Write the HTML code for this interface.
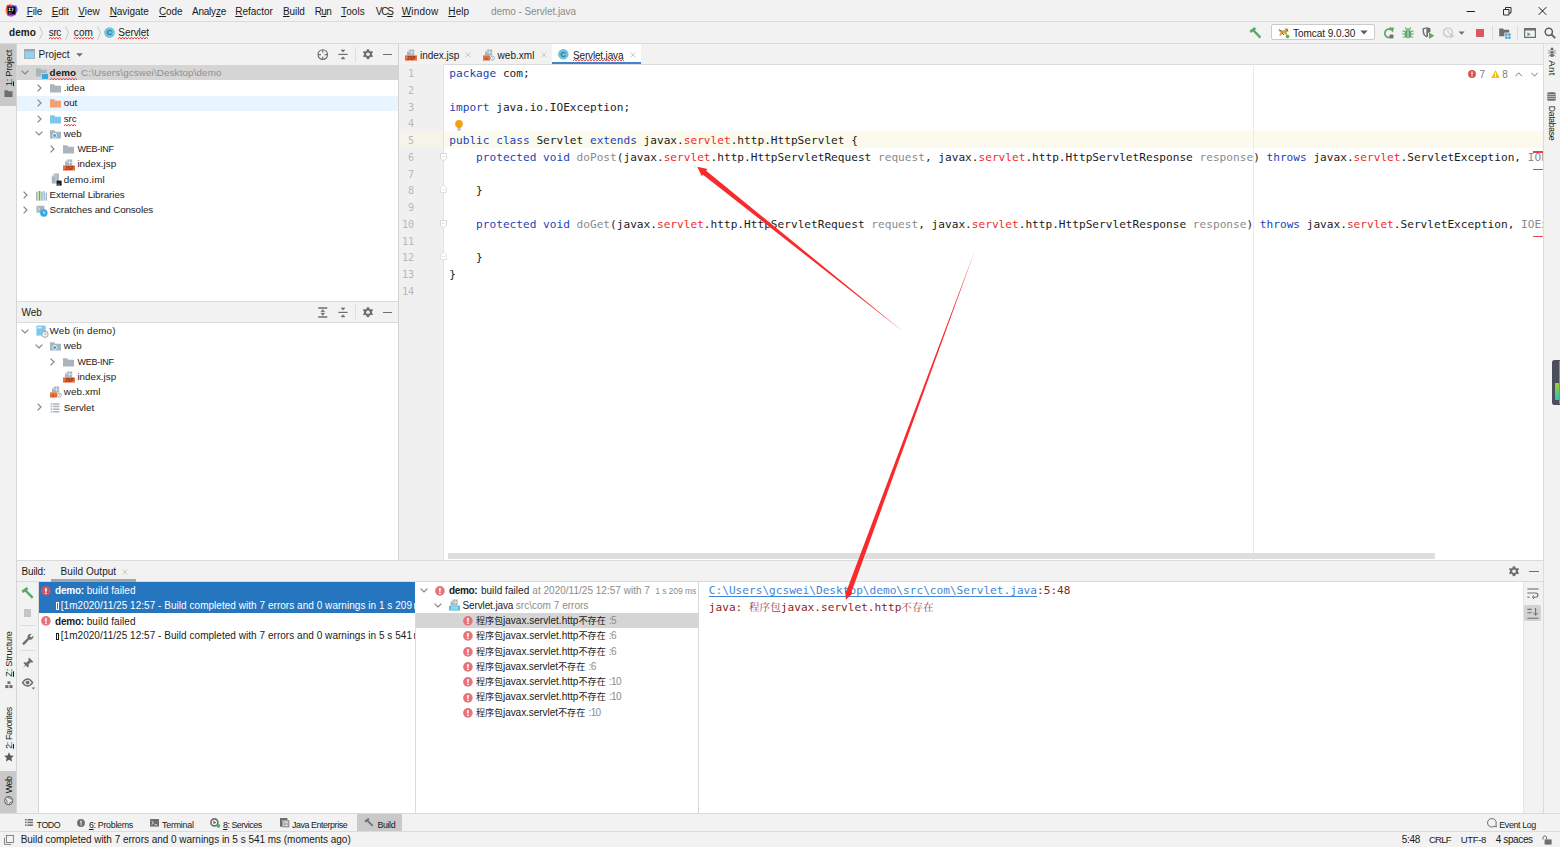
<!DOCTYPE html>
<html lang="en">
<head>
<meta charset="utf-8">
<title>demo - Servlet.java</title>
<style>
html,body{margin:0;padding:0;}
body{width:1560px;height:847px;overflow:hidden;background:#f2f2f2;position:relative;
  font-family:"Liberation Sans","Noto Sans CJK SC",sans-serif;font-size:10px;color:#1a1a1a;}
.abs{position:absolute;}
.t{position:absolute;white-space:pre;line-height:14px;height:14px;}
.hl{position:absolute;height:1px;background:#dadada;}
.vl{position:absolute;width:1px;background:#d6d6d6;}
.gray{color:#8c8c8c;}
.wavy{text-decoration:underline wavy #e0403a;text-decoration-thickness:0.7px;text-underline-offset:1.5px;}
u{text-decoration:underline;text-underline-offset:1px;}
svg{position:absolute;overflow:visible;}
.vt{font-size:9.6px;}
.vt span{position:absolute;left:50%;top:50%;transform:translate(-50%,-50%) rotate(-90deg);white-space:pre;line-height:14px;}
.vr span{transform:translate(-50%,-50%) rotate(90deg);}
/* code */
.code{position:absolute;white-space:pre;font-family:"DejaVu Sans Mono","Liberation Mono",monospace;font-size:11.13px;line-height:16.77px;color:#1a1a1a;}
.kw{color:#1c3fb5;}
.er{color:#ee2b2b;}
.un{color:#8a8a8a;}
.ln{position:absolute;font-family:"DejaVu Sans Mono","Liberation Mono",monospace;font-size:10.2px;line-height:16.77px;color:#b8b8b8;white-space:pre;}
.row{position:absolute;left:0;right:0;height:15.3px;}
</style>
</head>
<body>

<!-- ============ MENU BAR ============ -->
<div class="abs" id="menubar" style="left:0;top:0;width:1560px;height:21px;background:#f2f2f2;"></div>
<!-- IntelliJ logo -->
<svg style="left:5px;top:4px;" width="13" height="13" viewBox="0 0 13 13">
  <defs>
    <linearGradient id="lg1" x1="0" y1="1" x2="1" y2="0"><stop offset="0" stop-color="#fc801d"/><stop offset="0.45" stop-color="#fe2857"/><stop offset="1" stop-color="#fe2857"/></linearGradient>
    <linearGradient id="lg2" x1="0" y1="0" x2="1" y2="1"><stop offset="0" stop-color="#087cfa"/><stop offset="1" stop-color="#b345f1"/></linearGradient>
  </defs>
  <path d="M0.3 6.5 L2 1 L6.5 0.3 L5 7 Z" fill="url(#lg1)"/>
  <path d="M6.5 0.8 L11.5 1.8 L12.8 6 L10 11.8 L6 9 Z" fill="url(#lg2)"/>
  <path d="M1.5 8 L6 5 L10.5 10.5 L7 12.7 L2.5 12 Z" fill="#b345f1"/>
  <path d="M0.3 6.5 L3 5 L3.5 10 L1.8 10.5 Z" fill="#fc801d"/>
  <rect x="2.6" y="2.6" width="7.8" height="7.8" fill="#000"/>
  <rect x="3.6" y="8.7" width="3" height="0.6" fill="#fff"/>
  <path d="M3.6 3.7h2.2v0.7h-0.7v1.9h0.7v0.7h-2.2v-0.7h0.7v-1.9h-0.7z M6.6 3.7h1.7v2.6q0 1-1.1 1h-0.7v-0.7h0.5q0.5 0 0.5-0.5v-1.7h-0.9z" fill="#fff"/>
</svg>
<div class="t" style="left:26.7px;top:5px;"><span style="letter-spacing:-0.131px;"><u>F</u>ile</span></div>
<div class="t" style="left:51.7px;top:5px;"><span style="letter-spacing:-0.059px;"><u>E</u>dit</span></div>
<div class="t" style="left:78.3px;top:5px;"><span style="letter-spacing:-0.029px;"><u>V</u>iew</span></div>
<div class="t" style="left:109.7px;top:5px;"><span style="letter-spacing:-0.061px;"><u>N</u>avigate</span></div>
<div class="t" style="left:159px;top:5px;"><span style="letter-spacing:-0.155px;"><u>C</u>ode</span></div>
<div class="t" style="left:192px;top:5px;"><span style="letter-spacing:-0.225px;">Analy<u>z</u>e</span></div>
<div class="t" style="left:235.3px;top:5px;"><span style="letter-spacing:-0.052px;"><u>R</u>efactor</span></div>
<div class="t" style="left:283px;top:5px;"><span style="letter-spacing:-0.110px;"><u>B</u>uild</span></div>
<div class="t" style="left:314.7px;top:5px;"><span style="letter-spacing:-0.686px;">R<u>u</u>n</span></div>
<div class="t" style="left:341px;top:5px;"><span style="letter-spacing:0.128px;"><u>T</u>ools</span></div>
<div class="t" style="left:375.7px;top:5px;"><span style="letter-spacing:-1.193px;">VC<u>S</u></span></div>
<div class="t" style="left:401.7px;top:5px;"><span style="letter-spacing:0.168px;"><u>W</u>indow</span></div>
<div class="t" style="left:448.3px;top:5px;"><span style="letter-spacing:0.102px;"><u>H</u>elp</span></div>
<div class="t gray" style="left:491px;top:5px;color:#8a8a8a;"><span style="letter-spacing:-0.061px;">demo - Servlet.java</span></div>
<!-- window controls -->
<svg style="left:1466px;top:6px;" width="90" height="10" viewBox="0 0 90 10" fill="none" stroke="#1a1a1a" stroke-width="1">
  <path d="M0.7 5.5h8.2"/>
  <path d="M37.5 3.5h5.5v5.5h-5.5z M39.5 3.5v-2h5.5v5.5h-2" stroke-width="0.9"/>
  <path d="M72.7 1.2l7.6 7.6M80.3 1.2l-7.6 7.6" stroke-width="1"/>
</svg>
<div class="hl" style="left:0;top:21px;width:1560px;background:#dcdcdc;"></div>

<!-- ============ NAV BAR ============ -->
<div class="abs" id="navbar" style="left:0;top:22px;width:1560px;height:21px;background:#f2f2f2;"></div>
<div class="t" style="left:9px;top:26px;font-weight:bold;"><span style="letter-spacing:0.082px;">demo</span></div>
<div class="t" style="left:48.8px;top:26px;"><span style="letter-spacing:-0.381px;">src</span></div><svg style="left:48.8px;top:37.3px;" width="12" height="2.4" viewBox="0 0 12 2.4" fill="none" stroke="#f04a4a" stroke-width="1.0"><path d="M0 2.1l1.5 -1.9l1.5 1.9l1.5 -1.9l1.5 1.9l1.5 -1.9l1.5 1.9l1.5 -1.9l1.5 1.9"/></svg>
<div class="t" style="left:73.8px;top:26px;"><span style="letter-spacing:0.098px;">com</span></div><svg style="left:73.8px;top:37.3px;" width="19" height="2.4" viewBox="0 0 19 2.4" fill="none" stroke="#f04a4a" stroke-width="1.0"><path d="M0 2.1l1.5 -1.9l1.5 1.9l1.5 -1.9l1.5 1.9l1.5 -1.9l1.5 1.9l1.5 -1.9l1.5 1.9l1.5 -1.9l1.5 1.9l1.5 -1.9l1.5 1.9l1.5 -1.9"/></svg>
<div class="t" style="left:118.3px;top:26px;"><span style="letter-spacing:-0.061px;">Servlet</span></div><svg style="left:118.3px;top:37.3px;" width="31" height="2.4" viewBox="0 0 31 2.4" fill="none" stroke="#f04a4a" stroke-width="1.0"><path d="M0 2.1l1.5 -1.9l1.5 1.9l1.5 -1.9l1.5 1.9l1.5 -1.9l1.5 1.9l1.5 -1.9l1.5 1.9l1.5 -1.9l1.5 1.9l1.5 -1.9l1.5 1.9l1.5 -1.9l1.5 1.9l1.5 -1.9l1.5 1.9l1.5 -1.9l1.5 1.9l1.5 -1.9l1.5 1.9"/></svg>
<svg style="left:38px;top:26px;" width="70" height="14" viewBox="0 0 70 14" fill="none" stroke="#c9c9c9" stroke-width="1">
  <path d="M1.5 0.5l3 6.5l-3 6.5"/><path d="M27.5 0.5l3 6.5l-3 6.5"/><path d="M59.5 0.5l3 6.5l-3 6.5"/>
</svg>
<!-- class icon -->
<svg style="left:104px;top:26.8px;" width="11" height="11" viewBox="0 0 11 11">
  <circle cx="5.5" cy="5.5" r="5.3" fill="#6cc3dc"/>
  <text x="5.5" y="8.2" font-family="Liberation Sans, sans-serif" font-size="7.5" font-weight="bold" fill="#3e6f8e" text-anchor="middle">C</text>
</svg>
<!-- toolbar right -->
<svg style="left:1249px;top:27px;" width="13" height="12" viewBox="0 0 13 12">
  <path d="M1.2 4.8L6.4 1" stroke="#59a869" stroke-width="2.7" fill="none"/><path d="M4.4 3.4L11.4 10.6" stroke="#59a869" stroke-width="2.3" fill="none"/>
</svg>
<div class="abs" style="left:1271px;top:24.4px;width:103.6px;height:16px;background:#fff;border:1px solid #cbcbcb;border-radius:2px;box-sizing:border-box;"></div>
<!-- tomcat icon -->
<svg style="left:1277px;top:26px;" width="14" height="13" viewBox="0 0 14 13">
  <path d="M1 4 L4 5 L7.6 4 L10.6 2 L11.4 4.4 L9.6 6.4 L10.4 9 L9 9.4 L7.6 7.4 L5 8 L3.4 10 L2.2 9.2 L3.6 6.8 Z" fill="#d9a343"/>
  <path d="M2 3.4 L5 5.4 M8.6 2.6 L10.8 5.4 M5 7 L7 9" stroke="#4d4d4d" stroke-width="0.9" fill="none"/>
  <circle cx="10.6" cy="10.6" r="1.8" fill="#2bc840"/>
</svg>
<div class="t" style="left:1293px;top:26.7px;"><span style="letter-spacing:-0.032px;">Tomcat 9.0.30</span></div>
<svg style="left:1360px;top:30px;" width="8" height="5" viewBox="0 0 8 5"><path d="M0.3 0.5h7.4l-3.7 4z" fill="#5c5c5c"/></svg>
<!-- rerun -->
<svg style="left:1383px;top:27px;" width="12" height="12" viewBox="0 0 12 12" fill="none">
  <path d="M8.8 3.2 A4.2 4.2 0 1 0 9.6 8.4" stroke="#59a869" stroke-width="1.7"/>
  <path d="M6.2 0.2 L11 0.8 L9.8 5.4 Z" fill="#59a869"/>
  <rect x="6.6" y="7.6" width="3.8" height="3.8" fill="#6e6e6e"/>
</svg>
<!-- debug -->
<svg style="left:1402px;top:27px;" width="12" height="12" viewBox="0 0 12 12">
  <ellipse cx="6" cy="7" rx="3.4" ry="4.2" fill="#59a869"/>
  <path d="M3.6 2.6 A2.6 2.2 0 0 1 8.4 2.6 Z" fill="#59a869"/>
  <path d="M0.5 4.2h2.6 M8.9 4.2h2.6 M0.3 7h2.4 M9.3 7h2.4 M0.8 10h2.4 M8.8 10h2.4 M3 0.6l1.2 1.4 M9 0.6l-1.2 1.4" stroke="#59a869" stroke-width="1.1" fill="none"/>
  <path d="M6 4v6.6" stroke="#f2f2f2" stroke-width="0.8"/>
</svg>
<!-- coverage -->
<svg style="left:1422px;top:27px;" width="13" height="12" viewBox="0 0 13 12">
  <path d="M0.6 1.2 L5 0.2 L8.4 1.2 V5 L6 6 V9.6 L4.6 10.6 Q0.6 8.4 0.6 4.6 Z" fill="#6e6e6e"/>
  <path d="M4.4 1.6 V9 Q2 7.2 2 4.4 V2.2 Z" fill="#f2f2f2"/>
  <path d="M7 5.6 L12.4 8.8 L7 12 Z" fill="#59a869"/>
</svg>
<!-- profiler disabled -->
<svg style="left:1443px;top:27px;" width="22" height="12" viewBox="0 0 22 12">
  <circle cx="5" cy="5.4" r="4.4" fill="none" stroke="#c4c4c4" stroke-width="1.2"/>
  <path d="M5 2.6v3l1.8 1.2" stroke="#c4c4c4" stroke-width="1" fill="none"/>
  <path d="M6.6 5.6 L12 8.8 L6.6 12 Z" fill="#c9c9c9" stroke="#f2f2f2" stroke-width="0.6"/>
  <path d="M15.6 4.4h6l-3 3.4z" fill="#6e6e6e"/>
</svg>
<!-- stop -->
<div class="abs" style="left:1476px;top:29.3px;width:7.6px;height:7.6px;background:#db5860;"></div>
<div class="vl" style="left:1492px;top:26px;height:14px;background:#dcdcdc;"></div>
<!-- project structure -->
<svg style="left:1499px;top:27px;" width="12" height="12" viewBox="0 0 12 12">
  <path d="M0.2 1.4h3.6l1.2 1.4h5.2v6.4h-10z" fill="#6e6e6e"/>
  <rect x="5.4" y="5.6" width="6.4" height="6.4" fill="#f2f2f2"/>
  <rect x="6.2" y="6.4" width="2.3" height="2.3" fill="#389fd6"/><rect x="9.3" y="6.4" width="2.3" height="2.3" fill="#389fd6"/>
  <rect x="6.2" y="9.5" width="2.3" height="2.3" fill="#389fd6"/><rect x="9.3" y="9.5" width="2.3" height="2.3" fill="#389fd6"/>
</svg>
<div class="vl" style="left:1517px;top:26px;height:14px;background:#dcdcdc;"></div>
<!-- run anything -->
<svg style="left:1524px;top:28px;" width="12" height="10" viewBox="0 0 12 10">
  <path d="M0.6 0.6h10.8v8.8h-10.8z" fill="none" stroke="#6e6e6e" stroke-width="1.2"/>
  <path d="M0.6 0.6h10.8v2h-10.8z" fill="#6e6e6e"/>
  <path d="M3.4 4.2l3.4 2l-3.4 2z" fill="#59a869"/>
</svg>
<!-- search -->
<svg style="left:1544px;top:27px;" width="12" height="12" viewBox="0 0 12 12" fill="none" stroke="#5e5e5e">
  <circle cx="4.8" cy="4.8" r="3.6" stroke-width="1.5"/><path d="M7.4 7.4l3.8 3.8" stroke-width="1.8"/>
</svg>
<div class="hl" style="left:0;top:43px;width:1560px;"></div>

<!-- ============ LEFT STRIP ============ -->
<div class="abs" id="leftstrip" style="left:0;top:44px;width:16px;height:769px;background:#f2f2f2;"></div>
<div class="vl" style="left:16px;top:44px;height:769px;"></div>

<!-- ============ PROJECT PANEL ============ -->
<div class="abs" id="projhead" style="left:17px;top:44px;width:381px;height:21px;background:#f2f2f2;"></div>
<div class="hl" style="left:17px;top:65px;width:381px;"></div>
<div class="abs" id="projtree" style="left:17px;top:65px;width:381px;height:236px;background:#fff;"></div>

<!-- ============ WEB PANEL ============ -->
<div class="hl" style="left:17px;top:301px;width:381px;"></div>
<div class="abs" id="webhead" style="left:17px;top:302px;width:381px;height:20px;background:#f2f2f2;"></div>
<div class="hl" style="left:17px;top:322px;width:381px;"></div>
<div class="abs" id="webtree" style="left:17px;top:323px;width:381px;height:237px;background:#fff;"></div>
<div class="vl" style="left:397.6px;top:44px;height:516px;width:1.5px;background:#d3d3d3;"></div>

<!-- ============ EDITOR ============ -->
<div class="abs" id="tabs" style="left:399px;top:44px;width:1145px;height:20px;background:#f2f2f2;"></div>
<div class="hl" style="left:399px;top:64px;width:1145px;"></div>
<div class="abs" id="editor" style="left:399px;top:65px;width:1145px;height:495px;background:#fff;overflow:hidden;"></div>

<!-- ============ RIGHT STRIP ============ -->
<div class="vl" style="left:1543px;top:44px;height:769px;"></div>
<div class="abs" id="rightstrip" style="left:1544px;top:44px;width:16px;height:769px;background:#f2f2f2;"></div>

<!-- ============ BUILD PANEL ============ -->
<div class="hl" style="left:17px;top:560px;width:1526px;"></div>
<div class="abs" id="buildhead" style="left:17px;top:561px;width:1526px;height:20px;background:#f2f2f2;"></div>
<div class="hl" style="left:17px;top:581px;width:1526px;"></div>
<div class="abs" id="build" style="left:17px;top:582px;width:1526px;height:231px;background:#fff;overflow:hidden;"></div>

<!-- ============ BOTTOM TOOL BAR ============ -->
<div class="hl" style="left:0;top:813.4px;width:1560px;"></div>
<div class="abs" id="bottombar" style="left:0;top:814.2px;width:1560px;height:17.4px;background:#f2f2f2;"></div>
<div class="hl" style="left:0;top:831.4px;width:1560px;background:#dcdcdc;"></div>

<!-- ============ STATUS BAR ============ -->
<div class="abs" id="status" style="left:0;top:832.4px;width:1560px;height:15px;background:#f2f2f2;"></div>

<!-- left strip content -->
<div class="abs" style="left:0;top:43.6px;width:16px;height:62.8px;background:#c9c9c9;"></div>
<div class="abs" style="left:0;top:770.6px;width:16px;height:42.6px;background:#c9c9c9;"></div>
<div class="t vt" style="left:2.2px;top:49.7px;width:14px;height:36.3px;"><span style="letter-spacing:-0.253px;font-size:9.2px;"><u>1</u>: Project</span></div>
<svg style="left:4.4px;top:90.4px;" width="9" height="7.2" viewBox="0 0 9 8"><path d="M0 0.2h3.4l1 1.2h4.6v6.4h-9z" fill="#6e6e6e"/></svg>
<div class="t vt" style="left:2.2px;top:631.5px;width:14px;height:45.5px;"><span style="letter-spacing:-0.210px;font-size:9.2px;"><u>Z</u>: Structure</span></div>
<svg style="left:4.6px;top:680.6px;" width="8" height="7.4" viewBox="0 0 9 9" fill="#6e6e6e"><rect x="2.6" y="0.4" width="3.6" height="3.2"/><rect x="0" y="5" width="3.8" height="3.6"/><rect x="5" y="5" width="3.8" height="3.6"/></svg>
<div class="t vt" style="left:2.2px;top:707px;width:14px;height:41.3px;"><span style="letter-spacing:-0.390px;font-size:8.8px;"><u>2</u>: Favorites</span></div>
<svg style="left:4px;top:752px;" width="10" height="10" viewBox="0 0 10 10"><path d="M5 0.2l1.5 3.2l3.4 0.4l-2.5 2.3l0.7 3.5l-3.1-1.8l-3.1 1.8l0.7-3.5l-2.5-2.3l3.4-0.4z" fill="#5a5a5a"/></svg>
<div class="t vt" style="left:2.2px;top:776.3px;width:14px;height:16.7px;"><span style="letter-spacing:-0.548px;font-size:9px;">Web</span></div>
<svg style="left:4px;top:796px;" width="9.4" height="9.4" viewBox="0 0 10 10"><circle cx="5" cy="5" r="4.3" fill="#e4e4e4" stroke="#6e6e6e" stroke-width="1.2"/><path d="M2 3.4q2 2 1.2 4.6M4 1q1.6 2.4 4.6 2.2M5.4 9q0.2-2.6 3.4-3" stroke="#6e6e6e" stroke-width="1" fill="none"/></svg>

<!-- project header content -->
<svg style="left:24px;top:49px;" width="11" height="10" viewBox="0 0 11 10"><rect x="0.4" y="0.4" width="10.2" height="9" fill="#93d2ee" stroke="#9aa7b0" stroke-width="0.8"/><rect x="0" y="0" width="11" height="2.4" fill="#9aa7b0"/></svg>
<div class="t" style="left:38.5px;top:47.8px;font-size:10px;"><span style="letter-spacing:-0.018px;">Project</span></div>
<svg style="left:76px;top:52.5px;" width="7" height="4" viewBox="0 0 7 4"><path d="M0.2 0.2h6.6l-3.3 3.6z" fill="#6e6e6e"/></svg>
<svg style="left:317px;top:48.5px;" width="12" height="12" viewBox="0 0 12 12" fill="none" stroke="#6e6e6e" stroke-width="1.1"><circle cx="5.8" cy="5.6" r="4.8"/><path d="M5.8 0.8v3M5.8 7.4v3M1 5.6h3M7.6 5.6h3"/></svg>
<svg style="left:338.2px;top:48.6px;" width="10" height="11" viewBox="0 0 10 11" fill="#6e6e6e" stroke="#6e6e6e" stroke-width="1.2"><path d="M0.4 5.4h9.2"/><path d="M3 0.9h4l-2 2.2zM3 9.9h4l-2-2.2z" stroke-width="0.5"/></svg>
<div class="vl" style="left:355px;top:46.6px;height:15px;background:#dedede;"></div>
<svg style="left:363px;top:49px;" width="10" height="11" viewBox="0 0 10 11"><path d="M5 0.2l1.2 0.2l0.4 1.5l1.2 0.7l1.4-0.5l0.8 1.2l-1 1.2v1.4l1 1.2l-0.8 1.2l-1.4-0.5l-1.2 0.7l-0.4 1.5l-1.2 0.2l-1.2-0.2l-0.4-1.5l-1.2-0.7l-1.4 0.5l-0.8-1.2l1-1.2v-1.4l-1-1.2l0.8-1.2l1.4 0.5l1.2-0.7l0.4-1.5z" fill="#6e6e6e"/><circle cx="5" cy="5.3" r="1.8" fill="#f2f2f2"/></svg>
<div class="abs" style="left:383px;top:53.6px;width:9px;height:1.2px;background:#6e6e6e;"></div>

<!-- project tree -->
<div class="abs" style="left:17px;top:65.4px;width:381px;height:14.8px;background:#d5d5d5;"></div>
<svg style="left:21px;top:70.2px;" width="8" height="5" viewBox="0 0 8 5" fill="none" stroke="#858585" stroke-width="1.2"><path d="M0.6 0.6l3.4 3.4l3.4-3.4"/></svg>
<svg style="left:36px;top:68.1px;" width="11" height="9" viewBox="0 0 11 9"><path d="M0 0.3h4.1l1.3 1.4h5.6v6.8h-11z" fill="#a9b4bd"/></svg><div class="abs" style="left:42.4px;top:73.69999999999999px;width:5.4px;height:5.4px;background:#35a9de;box-shadow:0 0 0 0.8px #d5d5d5;"></div>
<div class="t" style="left:49.6px;top:65.6px;font-size:9.8px;"><b style="letter-spacing:0.090px;">demo</b><span class="gray" style="letter-spacing:0.137px;margin-left:5px;color:#8f8f8f;">C:\Users\gcswei\Desktop\demo</span></div>
<svg style="left:36.8px;top:83.9px;" width="5" height="8" viewBox="0 0 5 8" fill="none" stroke="#858585" stroke-width="1.2"><path d="M0.6 0.6l3.4 3.4l-3.4 3.4"/></svg>
<svg style="left:49.5px;top:84.0px;" width="11" height="9" viewBox="0 0 11 9"><path d="M0 0.3h4.1l1.3 1.4h5.6v6.8h-11z" fill="#a9b4bd"/></svg>
<div class="t" style="left:63.7px;top:80.9px;font-size:9.8px;">.idea</div>
<div class="abs" style="left:17px;top:96.0px;width:381px;height:15.3px;background:#e9f5fe;"></div>
<svg style="left:36.8px;top:99.2px;" width="5" height="8" viewBox="0 0 5 8" fill="none" stroke="#858585" stroke-width="1.2"><path d="M0.6 0.6l3.4 3.4l-3.4 3.4"/></svg>
<svg style="left:49.5px;top:99.2px;" width="11" height="9" viewBox="0 0 11 9"><path d="M0 0.3h4.1l1.3 1.4h5.6v6.8h-11z" fill="#f2a172"/></svg>
<div class="t" style="left:63.7px;top:96.2px;font-size:9.8px;">out</div>
<svg style="left:36.8px;top:114.5px;" width="5" height="8" viewBox="0 0 5 8" fill="none" stroke="#858585" stroke-width="1.2"><path d="M0.6 0.6l3.4 3.4l-3.4 3.4"/></svg>
<svg style="left:49.5px;top:114.6px;" width="11" height="9" viewBox="0 0 11 9"><path d="M0 0.3h4.1l1.3 1.4h5.6v6.8h-11z" fill="#7cc7ea"/></svg>
<div class="t" style="left:63.7px;top:111.5px;font-size:9.8px;">src</div>
<svg style="left:34.8px;top:131.3px;" width="8" height="5" viewBox="0 0 8 5" fill="none" stroke="#858585" stroke-width="1.2"><path d="M0.6 0.6l3.4 3.4l3.4-3.4"/></svg>
<svg style="left:49.5px;top:129.8px;" width="11" height="9" viewBox="0 0 11 9"><path d="M0 0.3h4.1l1.3 1.4h5.6v6.8h-11z" fill="#a9b4bd"/><circle cx="4.6" cy="5.4" r="2.3" fill="#e9f6fd"/><circle cx="4.6" cy="5.4" r="1.5" fill="#35a9de"/></svg>
<div class="t" style="left:63.7px;top:126.8px;font-size:9.8px;">web</div>
<svg style="left:50.4px;top:145.1px;" width="5" height="8" viewBox="0 0 5 8" fill="none" stroke="#858585" stroke-width="1.2"><path d="M0.6 0.6l3.4 3.4l-3.4 3.4"/></svg>
<svg style="left:63.3px;top:145.2px;" width="11" height="9" viewBox="0 0 11 9"><path d="M0 0.3h4.1l1.3 1.4h5.6v6.8h-11z" fill="#a9b4bd"/></svg>
<div class="t" style="left:77.4px;top:142.1px;font-size:9.8px;"><span style="letter-spacing:-0.214px;font-size:9px;">WEB-INF</span></div>
<svg style="left:63.3px;top:158.5px;" width="12" height="12" viewBox="0 0 12 12"><path d="M4.4 0.4h4.8v6h-7.2v-3.6z" fill="#a9b4bd"/><path d="M4.4 0.4v2.4h-2.4z" fill="#e3e7ea"/><path d="M6.6 1v4.6M4.4 3.4h4.6" stroke="#e9edf0" stroke-width="0.7"/><rect x="0" y="6.4" width="12" height="5.2" fill="#e8703d"/><text x="6" y="10.9" font-family="Liberation Sans, sans-serif" font-weight="bold" font-size="4.6" fill="#8b2f12" text-anchor="middle">JSP</text></svg>
<div class="t" style="left:77.4px;top:157.4px;font-size:9.8px;"><span style="letter-spacing:0.003px;">index.jsp</span></div>
<svg style="left:50.9px;top:173.2px;" width="11" height="13" viewBox="0 0 11 13"><path d="M3.2 0.4h4.6v10h-7v-7z" fill="#a9b4bd"/><path d="M3.2 0.4v3h-2.4z" fill="#e3e7ea"/><path d="M5 1v9" stroke="#e3e7ea" stroke-width="0.6"/><rect x="5.6" y="7.6" width="5" height="5" fill="#1a1a1a"/><rect x="6.6" y="10.8" width="2" height="0.6" fill="#fff"/></svg>
<div class="t" style="left:63.7px;top:172.7px;font-size:9.8px;"><span style="letter-spacing:0.181px;">demo.iml</span></div>
<svg style="left:23px;top:191.0px;" width="5" height="8" viewBox="0 0 5 8" fill="none" stroke="#858585" stroke-width="1.2"><path d="M0.6 0.6l3.4 3.4l-3.4 3.4"/></svg>
<svg style="left:36px;top:190.9px;" width="11" height="10" viewBox="0 0 11 10"><rect x="0" y="0.6" width="1.6" height="9" fill="#a9b4bd"/><rect x="2.6" y="0" width="1.8" height="9.6" fill="#62b543"/><rect x="5.2" y="0.6" width="1.6" height="9" fill="#a9b4bd"/><rect x="7.4" y="0" width="1.6" height="9.6" fill="#9cc4e4"/><rect x="9.6" y="1.6" width="1.4" height="8" fill="#a9b4bd"/></svg>
<div class="t" style="left:49.6px;top:188.0px;font-size:9.8px;"><span style="letter-spacing:-0.069px;">External Libraries</span></div>
<svg style="left:23px;top:206.3px;" width="5" height="8" viewBox="0 0 5 8" fill="none" stroke="#858585" stroke-width="1.2"><path d="M0.6 0.6l3.4 3.4l-3.4 3.4"/></svg>
<svg style="left:36px;top:204.8px;" width="13" height="13" viewBox="0 0 13 13"><path d="M0.4 0.8h8v6.8h-4l-4 0z" fill="#a9b4bd"/><path d="M1.6 2l2 1.8l-2 1.8M5 6h2.4" stroke="#f4f6f7" stroke-width="0.8" fill="none"/><circle cx="7.8" cy="8" r="3.7" fill="#35a9de"/><path d="M7.8 6v2.2h1.5" stroke="#e8f6fd" stroke-width="0.9" fill="none"/></svg>
<div class="t" style="left:49.6px;top:203.3px;font-size:9.8px;"><span style="letter-spacing:-0.123px;">Scratches and Consoles</span></div><svg style="left:49.6px;top:77.5px;" width="26" height="2.4" viewBox="0 0 26 2.4" fill="none" stroke="#f04a4a" stroke-width="1.0"><path d="M0 2.1l1.5 -1.9l1.5 1.9l1.5 -1.9l1.5 1.9l1.5 -1.9l1.5 1.9l1.5 -1.9l1.5 1.9l1.5 -1.9l1.5 1.9l1.5 -1.9l1.5 1.9l1.5 -1.9l1.5 1.9l1.5 -1.9l1.5 1.9l1.5 -1.9l1.5 1.9"/></svg><svg style="left:63.7px;top:123.5px;" width="12" height="2.4" viewBox="0 0 12 2.4" fill="none" stroke="#f04a4a" stroke-width="1.0"><path d="M0 2.1l1.5 -1.9l1.5 1.9l1.5 -1.9l1.5 1.9l1.5 -1.9l1.5 1.9l1.5 -1.9l1.5 1.9"/></svg>
<!-- web header content -->
<div class="t" style="left:21.5px;top:306px;font-size:10px;">Web</div>
<svg style="left:318.2px;top:307px;" width="9.6" height="11" viewBox="0 0 10 11" fill="#6e6e6e" stroke="#6e6e6e"><path d="M0.3 0.9h9.4M0.3 10.1h9.4" stroke-width="1.5"/><path d="M3 4.7h4l-2-2.2zM3 6.3h4l-2 2.2z" stroke-width="0.5"/></svg>
<svg style="left:338.2px;top:307.1px;" width="10" height="11" viewBox="0 0 10 11" fill="#6e6e6e" stroke="#6e6e6e" stroke-width="1.2"><path d="M0.4 5.4h9.2"/><path d="M3 0.9h4l-2 2.2zM3 9.9h4l-2-2.2z" stroke-width="0.5"/></svg>
<div class="vl" style="left:355px;top:304.4px;height:15px;background:#dedede;"></div>
<svg style="left:363px;top:307px;" width="10" height="11" viewBox="0 0 10 11"><path d="M5 0.2l1.2 0.2l0.4 1.5l1.2 0.7l1.4-0.5l0.8 1.2l-1 1.2v1.4l1 1.2l-0.8 1.2l-1.4-0.5l-1.2 0.7l-0.4 1.5l-1.2 0.2l-1.2-0.2l-0.4-1.5l-1.2-0.7l-1.4 0.5l-0.8-1.2l1-1.2v-1.4l-1-1.2l0.8-1.2l1.4 0.5l1.2-0.7l0.4-1.5z" fill="#6e6e6e"/><circle cx="5" cy="5.3" r="1.8" fill="#f2f2f2"/></svg>
<div class="abs" style="left:383px;top:311.6px;width:9px;height:1.2px;background:#6e6e6e;"></div>

<!-- web tree -->
<svg style="left:21px;top:328.5px;" width="8" height="5" viewBox="0 0 8 5" fill="none" stroke="#858585" stroke-width="1.2"><path d="M0.6 0.6l3.4 3.4l3.4-3.4"/></svg>
<svg style="left:36px;top:325.4px;" width="13" height="13" viewBox="0 0 13 13"><rect x="0.4" y="0.6" width="9.2" height="10" fill="#7cc7ea"/><rect x="1.6" y="2" width="4" height="1.4" fill="#e6f5fc"/><circle cx="9" cy="9.2" r="3.2" fill="#f4f4f4" stroke="#8e9aa3" stroke-width="0.9"/><path d="M9 7.4v1.9h1.5" stroke="#8e9aa3" stroke-width="0.8" fill="none"/></svg>
<div class="t" style="left:49.6px;top:324.0px;font-size:9.8px;"><span style="letter-spacing:0.148px;">Web (in demo)</span></div>
<svg style="left:34.8px;top:343.8px;" width="8" height="5" viewBox="0 0 8 5" fill="none" stroke="#858585" stroke-width="1.2"><path d="M0.6 0.6l3.4 3.4l3.4-3.4"/></svg>
<svg style="left:49.5px;top:342.4px;" width="11" height="9" viewBox="0 0 11 9"><path d="M0 0.3h4.1l1.3 1.4h5.6v6.8h-11z" fill="#a9b4bd"/><circle cx="4.6" cy="5.4" r="2.3" fill="#e9f6fd"/><circle cx="4.6" cy="5.4" r="1.5" fill="#35a9de"/></svg>
<div class="t" style="left:63.7px;top:339.3px;font-size:9.8px;">web</div>
<svg style="left:50.4px;top:357.5px;" width="5" height="8" viewBox="0 0 5 8" fill="none" stroke="#858585" stroke-width="1.2"><path d="M0.6 0.6l3.4 3.4l-3.4 3.4"/></svg>
<svg style="left:63.3px;top:357.7px;" width="11" height="9" viewBox="0 0 11 9"><path d="M0 0.3h4.1l1.3 1.4h5.6v6.8h-11z" fill="#a9b4bd"/></svg>
<div class="t" style="left:77.4px;top:354.6px;font-size:9.8px;"><span style="letter-spacing:-0.214px;font-size:9px;">WEB-INF</span></div>
<svg style="left:63.3px;top:371.0px;" width="12" height="12" viewBox="0 0 12 12"><path d="M4.4 0.4h4.8v6h-7.2v-3.6z" fill="#a9b4bd"/><path d="M4.4 0.4v2.4h-2.4z" fill="#e3e7ea"/><path d="M6.6 1v4.6M4.4 3.4h4.6" stroke="#e9edf0" stroke-width="0.7"/><rect x="0" y="6.4" width="12" height="5.2" fill="#e8703d"/><text x="6" y="10.9" font-family="Liberation Sans, sans-serif" font-weight="bold" font-size="4.6" fill="#8b2f12" text-anchor="middle">JSP</text></svg>
<div class="t" style="left:77.4px;top:369.9px;font-size:9.8px;"><span style="letter-spacing:0.003px;">index.jsp</span></div>
<svg style="left:49.8px;top:386.2px;" width="13" height="12" viewBox="0 0 13 12"><path d="M4.4 0.4h4.8v6h-7.2v-3.6z" fill="#a9b4bd"/><path d="M4.4 0.4v2.4h-2.4z" fill="#e3e7ea"/><path d="M6.6 1v4.6M4.4 3.4h4.6" stroke="#e9edf0" stroke-width="0.7"/><rect x="0" y="6.4" width="7" height="5.2" fill="#e8703d"/><text x="3.4" y="10.7" font-family="Liberation Sans, sans-serif" font-weight="bold" font-size="4.4" fill="#8b2f12" text-anchor="middle">&lt;</text><circle cx="9.4" cy="9.2" r="2" fill="#fff" stroke="#9aa7b0" stroke-width="0.9"/><path d="M9.4 8.2v1.1h0.9" stroke="#9aa7b0" stroke-width="0.6" fill="none"/></svg>
<div class="t" style="left:63.7px;top:385.2px;font-size:9.8px;"><span style="letter-spacing:0.152px;">web.xml</span></div>
<svg style="left:36.8px;top:403.4px;" width="5" height="8" viewBox="0 0 5 8" fill="none" stroke="#858585" stroke-width="1.2"><path d="M0.6 0.6l3.4 3.4l-3.4 3.4"/></svg>
<svg style="left:50.1px;top:403.1px;" width="10" height="10" viewBox="0 0 10 10"><path d="M0.6 1h8.8M0.6 3.6h8.8M0.6 6.2h8.8M0.6 8.8h8.8" stroke="#a9b4bd" stroke-width="1.5"/><path d="M2.6 0v10" stroke="#fff" stroke-width="0.7"/></svg>
<div class="t" style="left:63.7px;top:400.5px;font-size:9.8px;"><span style="letter-spacing:0.000px;">Servlet</span></div>
<!-- editor tabs -->
<div class="abs" style="left:551.5px;top:44px;width:89.5px;height:18px;background:#fff;"></div>
<div class="abs" style="left:551.5px;top:62px;width:89.5px;height:2.4px;background:#4083c9;"></div>
<svg style="left:405px;top:49px;" width="12" height="12" viewBox="0 0 12 12"><path d="M4.4 0.4h4.8v6h-7.2v-3.6z" fill="#a9b4bd"/><path d="M4.4 0.4v2.4h-2.4z" fill="#e3e7ea"/><path d="M6.6 1v4.6M4.4 3.4h4.6" stroke="#e9edf0" stroke-width="0.7"/><rect x="0" y="6.4" width="12" height="5.2" fill="#e8703d"/><text x="6" y="10.9" font-family="Liberation Sans, sans-serif" font-weight="bold" font-size="4.6" fill="#8b2f12" text-anchor="middle">JSP</text></svg>
<div class="t" style="left:420px;top:48.5px;"><span style="letter-spacing:-0.019px;">index.jsp</span></div>
<svg style="left:465.3px;top:51.6px;" width="6" height="6" viewBox="0 0 6 6" fill="none" stroke="#c2c2c2" stroke-width="0.9"><path d="M0.5 0.5l4.8 4.8M5.3 0.5l-4.8 4.8"/></svg>
<svg style="left:482.6px;top:49px;" width="13" height="12" viewBox="0 0 13 12"><path d="M4.4 0.4h4.8v6h-7.2v-3.6z" fill="#a9b4bd"/><path d="M4.4 0.4v2.4h-2.4z" fill="#e3e7ea"/><path d="M6.6 1v4.6M4.4 3.4h4.6" stroke="#e9edf0" stroke-width="0.7"/><rect x="0" y="6.4" width="7" height="5.2" fill="#e8703d"/><text x="3.4" y="10.7" font-family="Liberation Sans, sans-serif" font-weight="bold" font-size="4.4" fill="#8b2f12" text-anchor="middle">&lt;</text><circle cx="9.4" cy="9.2" r="2" fill="#fff" stroke="#9aa7b0" stroke-width="0.9"/><path d="M9.4 8.2v1.1h0.9" stroke="#9aa7b0" stroke-width="0.6" fill="none"/></svg>
<div class="t" style="left:497.6px;top:48.5px;"><span style="letter-spacing:0.016px;">web.xml</span></div>
<svg style="left:540.8px;top:51.6px;" width="6" height="6" viewBox="0 0 6 6" fill="none" stroke="#c2c2c2" stroke-width="0.9"><path d="M0.5 0.5l4.8 4.8M5.3 0.5l-4.8 4.8"/></svg>
<svg style="left:558.2px;top:49.2px;" width="11" height="11" viewBox="0 0 11 11"><circle cx="5.3" cy="5.3" r="5.2" fill="#6cc3dc"/><text x="5.3" y="8" font-family="Liberation Sans, sans-serif" font-size="7.5" font-weight="bold" fill="#3e6f8e" text-anchor="middle">C</text></svg>
<div class="t" style="left:573px;top:48.5px;"><span style="letter-spacing:-0.163px;">Servlet.java</span></div>
<svg style="left:573px;top:59.1px;" width="50" height="2.4" viewBox="0 0 50 2.4" fill="none" stroke="#f04a4a" stroke-width="1.0"><path d="M0 2.1l1.5 -1.9l1.5 1.9l1.5 -1.9l1.5 1.9l1.5 -1.9l1.5 1.9l1.5 -1.9l1.5 1.9l1.5 -1.9l1.5 1.9l1.5 -1.9l1.5 1.9l1.5 -1.9l1.5 1.9l1.5 -1.9l1.5 1.9l1.5 -1.9l1.5 1.9l1.5 -1.9l1.5 1.9l1.5 -1.9l1.5 1.9l1.5 -1.9l1.5 1.9l1.5 -1.9l1.5 1.9l1.5 -1.9l1.5 1.9l1.5 -1.9l1.5 1.9l1.5 -1.9l1.5 1.9l1.5 -1.9l1.5 1.9"/></svg>
<svg style="left:630.2px;top:51.6px;" width="6" height="6" viewBox="0 0 6 6" fill="none" stroke="#c2c2c2" stroke-width="0.9"><path d="M0.5 0.5l4.8 4.8M5.3 0.5l-4.8 4.8"/></svg>
<!-- editor body -->
<div class="abs" style="left:0;top:0;width:1543.6px;height:560px;overflow:hidden;pointer-events:none;">
<div class="abs" style="left:399px;top:64.4px;width:44px;height:496px;background:#f0f0f0;"></div>
<div class="abs" style="left:443px;top:64.4px;width:1px;height:496px;background:#e3e3e3;"></div>
<div class="abs" style="left:399px;top:131.4px;width:44px;height:17.0px;background:#f6f4ea;"></div>
<div class="abs" style="left:444px;top:131.4px;width:1100px;height:17.0px;background:#fcfaed;"></div>
<div class="abs" style="left:1253px;top:64.4px;width:1px;height:496px;background:#ebebeb;"></div>
<div class="ln" style="left:399px;width:15.2px;text-align:right;top:66.00px;">1</div>
<div class="ln" style="left:399px;width:15.2px;text-align:right;top:82.77px;">2</div>
<div class="ln" style="left:399px;width:15.2px;text-align:right;top:99.54px;">3</div>
<div class="ln" style="left:399px;width:15.2px;text-align:right;top:116.31px;">4</div>
<div class="ln" style="left:399px;width:15.2px;text-align:right;top:133.08px;">5</div>
<div class="ln" style="left:399px;width:15.2px;text-align:right;top:149.85px;">6</div>
<div class="ln" style="left:399px;width:15.2px;text-align:right;top:166.62px;">7</div>
<div class="ln" style="left:399px;width:15.2px;text-align:right;top:183.39px;">8</div>
<div class="ln" style="left:399px;width:15.2px;text-align:right;top:200.16px;">9</div>
<div class="ln" style="left:399px;width:15.2px;text-align:right;top:216.93px;">10</div>
<div class="ln" style="left:399px;width:15.2px;text-align:right;top:233.70px;">11</div>
<div class="ln" style="left:399px;width:15.2px;text-align:right;top:250.47px;">12</div>
<div class="ln" style="left:399px;width:15.2px;text-align:right;top:267.24px;">13</div>
<div class="ln" style="left:399px;width:15.2px;text-align:right;top:284.01px;">14</div>
<div class="code" style="left:449.3px;top:66.00px;"><span class="kw">package</span> com;</div>
<div class="code" style="left:449.3px;top:99.54px;"><span class="kw">import</span> java.io.IOException;</div>
<div class="code" style="left:449.3px;top:133.08px;"><span class="kw">public</span> <span class="kw">class</span> Servlet <span class="kw">extends</span> javax.<span class="er">servlet</span>.http.HttpServlet {</div>
<div class="code" style="left:449.3px;top:149.85px;">    <span class="kw">protected</span> <span class="kw">void</span> <span class="un">doPost</span>(javax.<span class="er">servlet</span>.http.HttpServletRequest <span class="un">request</span>, javax.<span class="er">servlet</span>.http.HttpServletResponse <span class="un">response</span>) <span class="kw">throws</span> javax.<span class="er">servlet</span>.ServletException, <span class="un">IOException</span> {</div>
<div class="code" style="left:449.3px;top:183.39px;">    }</div>
<div class="code" style="left:449.3px;top:216.93px;">    <span class="kw">protected</span> <span class="kw">void</span> <span class="un">doGet</span>(javax.<span class="er">servlet</span>.http.HttpServletRequest <span class="un">request</span>, javax.<span class="er">servlet</span>.http.HttpServletResponse <span class="un">response</span>) <span class="kw">throws</span> javax.<span class="er">servlet</span>.ServletException, <span class="un">IOException</span> {</div>
<div class="code" style="left:449.3px;top:250.47px;">    }</div>
<div class="code" style="left:449.3px;top:267.24px;">}</div>
<svg style="left:455.4px;top:119.8px;" width="8" height="11" viewBox="0 0 8 11"><circle cx="4" cy="3.9" r="3.8" fill="#f0a30a"/><rect x="2.2" y="6.6" width="3.6" height="1.6" fill="#f0a30a"/><rect x="2.3" y="8.3" width="3.4" height="2.2" fill="#b5b5b5"/></svg>
<svg style="left:440px;top:152.7px;" width="7" height="9" viewBox="0 0 7 9"><path d="M0.5 0.5h6v4.6l-3 3.2l-3-3.2z" fill="#fff" stroke="#d4d4d4" stroke-width="0.9"/><path d="M2 3.4h3" stroke="#d4d4d4" stroke-width="0.8"/></svg>
<svg style="left:440px;top:184.3px;" width="7" height="9" viewBox="0 0 7 9"><path d="M0.5 8.5h6v-4.6l-3-3.2l-3 3.2z" fill="#fff" stroke="#dcdcdc" stroke-width="0.9"/><path d="M2 5.6h3" stroke="#dcdcdc" stroke-width="0.8"/></svg>
<svg style="left:440px;top:219.8px;" width="7" height="9" viewBox="0 0 7 9"><path d="M0.5 0.5h6v4.6l-3 3.2l-3-3.2z" fill="#fff" stroke="#d4d4d4" stroke-width="0.9"/><path d="M2 3.4h3" stroke="#d4d4d4" stroke-width="0.8"/></svg>
<svg style="left:440px;top:251.4px;" width="7" height="9" viewBox="0 0 7 9"><path d="M0.5 8.5h6v-4.6l-3-3.2l-3 3.2z" fill="#fff" stroke="#dcdcdc" stroke-width="0.9"/><path d="M2 5.6h3" stroke="#dcdcdc" stroke-width="0.8"/></svg>
<svg style="left:1468.2px;top:70px;" width="8" height="8" viewBox="0 0 8 8"><circle cx="4" cy="4" r="3.9" fill="#db4f4f"/><rect x="3.4" y="1.5" width="1.2" height="3.2" fill="#fff"/><rect x="3.4" y="5.3" width="1.2" height="1.2" fill="#fff"/></svg>
<div class="t" style="left:1479.6px;top:67.6px;font-size:10px;color:#7d7d7d;">7</div>
<svg style="left:1491.3px;top:69.6px;" width="9" height="8" viewBox="0 0 9 8"><path d="M4.5 0.1l4.4 7.8h-8.8z" fill="#f2c21a"/><rect x="4" y="2.6" width="1" height="2.8" fill="#fff"/><rect x="4" y="6" width="1" height="1" fill="#fff"/></svg>
<div class="t" style="left:1502.3px;top:67.6px;font-size:10px;color:#7d7d7d;">8</div>
<svg style="left:1515.4px;top:72px;" width="24" height="5" viewBox="0 0 24 5" fill="none" stroke="#7a7a7a" stroke-width="1"><path d="M0.5 4.2l3.2-3.4l3.2 3.4"/><path d="M16.6 0.8l3 3.4l3-3.4"/></svg>
<div class="abs" style="left:1533px;top:151.2px;width:10.6px;height:1.4px;background:#e0454f;"></div>
<div class="abs" style="left:1533px;top:168.6px;width:10.6px;height:1.4px;background:#e0454f;"></div>
<div class="abs" style="left:1533px;top:235.6px;width:10.6px;height:1.4px;background:#e0454f;"></div>
<div class="abs" style="left:448px;top:552.8px;width:987px;height:6.2px;background:#dedede;"></div>
</div>
<!-- right strip -->
<div class="vl" style="left:1543.4px;top:44px;height:769.4px;background:#dbdbdb;"></div>
<svg style="left:1547px;top:47px;" width="10" height="10" viewBox="0 0 10 10" fill="#6e6e6e"><ellipse cx="5" cy="2" rx="1.6" ry="1.6"/><ellipse cx="5" cy="5.4" rx="1.4" ry="1.4"/><ellipse cx="5" cy="8.4" rx="1.8" ry="1.6"/><path d="M1 3l3 2M9 3l-3 2M0.8 6h3M9.2 6h-3M1.4 9.4l2.4-2M8.6 9.4l-2.4-2" stroke="#6e6e6e" stroke-width="0.7"/></svg>
<div class="t vt vr" style="left:1545px;top:59px;width:14px;height:17px;"><span style="letter-spacing:0.398px;">Ant</span></div>
<svg style="left:1547.4px;top:92.4px;" width="9" height="9" viewBox="0 0 9 9"><rect x="0.2" y="0.2" width="8.6" height="8.6" rx="1.6" fill="#6e6e6e"/><path d="M0.2 2.6h8.6M0.2 4.6h8.6M0.2 6.6h8.6" stroke="#f2f2f2" stroke-width="0.6"/></svg>
<div class="t vt vr" style="left:1545px;top:105px;width:14px;height:35px;"><span style="letter-spacing:-0.300px;font-size:8.6px;">Database</span></div>
<div class="abs" style="left:1551.6px;top:360px;width:8.4px;height:45px;background:#4b4f5b;border-radius:2.5px 0 0 2.5px;"></div>
<div class="abs" style="left:1559.2px;top:361px;width:0.8px;height:43px;background:#8a8d98;"></div>
<div class="abs" style="left:1555px;top:383.4px;width:3.6px;height:17px;background:linear-gradient(#b4c834,#5cc878 55%,#2cc0b4);"></div>
<!-- build header -->
<div class="t" style="left:21.6px;top:565px;"><span style="letter-spacing:-0.169px;">Build:</span></div>
<div class="t" style="left:60.6px;top:565px;"><span style="letter-spacing:0.046px;">Build Output</span></div>
<svg style="left:122.2px;top:568.6px;" width="6" height="6" viewBox="0 0 6 6" fill="none" stroke="#c2c2c2" stroke-width="0.9"><path d="M0.5 0.5l4.8 4.8M5.3 0.5l-4.8 4.8"/></svg>
<div class="abs" style="left:51.2px;top:579.2px;width:84.6px;height:2.4px;background:#9ea7ae;"></div>
<svg style="left:1509px;top:566.4px;" width="10" height="11" viewBox="0 0 10 11"><path d="M5 0.2l1.2 0.2l0.4 1.5l1.2 0.7l1.4-0.5l0.8 1.2l-1 1.2v1.4l1 1.2l-0.8 1.2l-1.4-0.5l-1.2 0.7l-0.4 1.5l-1.2 0.2l-1.2-0.2l-0.4-1.5l-1.2-0.7l-1.4 0.5l-0.8-1.2l1-1.2v-1.4l-1-1.2l0.8-1.2l1.4 0.5l1.2-0.7l0.4-1.5z" fill="#6e6e6e"/><circle cx="5" cy="5.3" r="1.8" fill="#f2f2f2"/></svg>
<div class="abs" style="left:1529.4px;top:571px;width:9.6px;height:1.2px;background:#6e6e6e;"></div>
<!-- build toolbar -->
<div class="abs" style="left:17px;top:582px;width:21.4px;height:231px;background:#f2f2f2;"></div>
<div class="vl" style="left:38.4px;top:582px;height:231px;"></div>
<svg style="left:20.6px;top:587px;" width="13.4" height="12.4" viewBox="0 0 13 12"><path d="M1.2 4.8L6.4 1" stroke="#59a869" stroke-width="2.7" fill="none"/><path d="M4.4 3.4L11.4 10.6" stroke="#59a869" stroke-width="2.3" fill="none"/></svg>
<div class="abs" style="left:23.6px;top:609px;width:7.6px;height:7.6px;background:#c6c6c6;"></div>
<div class="hl" style="left:20px;top:625px;width:16px;background:#dedede;"></div>
<svg style="left:22px;top:632.6px;" width="12" height="12" viewBox="0 0 12 12"><path d="M11.2 2.6 L9.2 4.6 L7.6 3 L9.6 1 A3.2 3.2 0 0 0 5.6 5 L0.8 9.8 A1.2 1.2 0 0 0 2.6 11.4 L7.2 6.6 A3.2 3.2 0 0 0 11.2 2.6 Z" fill="#6e6e6e"/></svg>
<div class="hl" style="left:20px;top:650.4px;width:16px;background:#dedede;"></div>
<svg style="left:22px;top:657px;" width="12" height="12" viewBox="0 0 12 12"><path d="M7 0.6 L11.4 5 L10.2 5.6 L8.4 5.4 L6.6 7.4 L6.8 9.6 L5.8 10.4 L3.6 8.4 L0.6 11.4 L3.2 8 L1.4 6 L2.4 5.2 L4.6 5.4 L6.6 3.6 L6.4 1.8 Z" fill="#6e6e6e"/></svg>
<svg style="left:21.6px;top:677px;" width="14" height="14" viewBox="0 0 14 14"><path d="M0.6 5.6 Q5.6 -1.4 10.6 5.6 Q5.6 12.6 0.6 5.6Z" fill="none" stroke="#6e6e6e" stroke-width="1.5"/><circle cx="5.6" cy="5.6" r="1.9" fill="#6e6e6e"/><path d="M9.6 10.4h3.6l-1.8 2.2z" fill="#6e6e6e"/></svg>
<!-- build list -->
<div class="abs" style="left:39.4px;top:582.4px;width:375.8px;height:231px;overflow:hidden;">
<div class="abs" style="left:0;top:0;width:376px;height:30.5px;background:#2675bf;"></div>
<svg style="left:2.1px;top:3.3px;" width="10" height="10" viewBox="0 0 10 10"><circle cx="4.9" cy="4.9" r="4.8" fill="#c9566a"/><rect x="4.1" y="1.9" width="1.6" height="3.8" rx="0.5" fill="#fff"/><rect x="4.1" y="6.5" width="1.6" height="1.6" rx="0.5" fill="#fff"/></svg>
<div class="t" style="left:15.6px;top:2.0px;color:#fff;"><b style="letter-spacing:-0.200px;">demo:</b><span style="letter-spacing:0.099px;margin-left:2.7px;">build failed</span></div>
<div class="abs" style="left:16.2px;top:19.8px;width:3.4px;height:7.4px;border:0.9px solid #fff;box-sizing:border-box;"></div>
<div class="t" style="left:21.4px;top:16.4px;color:#fff;"><span style="letter-spacing:0.037px;">[1m2020/11/25 12:57 - Build completed with 7 errors and 0 warnings in 1 s 209</span><span style="margin-left:-1.3px;"> ms</span></div>
<svg style="left:2.1px;top:33.9px;" width="10" height="10" viewBox="0 0 10 10"><circle cx="4.9" cy="4.9" r="4.8" fill="#e8737b"/><rect x="4.1" y="1.9" width="1.6" height="3.8" rx="0.5" fill="#fff"/><rect x="4.1" y="6.5" width="1.6" height="1.6" rx="0.5" fill="#fff"/></svg>
<div class="t" style="left:15.6px;top:32.5px;color:#1a1a1a;"><b style="letter-spacing:-0.200px;">demo:</b><span style="letter-spacing:0.099px;margin-left:2.7px;">build failed</span></div>
<div class="abs" style="left:16.2px;top:50.3px;width:3.4px;height:7.4px;border:0.9px solid #1a1a1a;box-sizing:border-box;"></div>
<div class="t" style="left:21.4px;top:46.9px;color:#1a1a1a;"><span style="letter-spacing:0.037px;">[1m2020/11/25 12:57 - Build completed with 7 errors and 0 warnings in 5 s 541</span><span style="margin-left:-1.3px;"> ms</span></div>
</div>
<div class="vl" style="left:415.2px;top:613px;height:200px;background:#dcdcdc;"></div>
<!-- build tree -->
<div class="abs" style="left:416.2px;top:582.4px;width:281.4px;height:231px;overflow:hidden;">
<div class="abs" style="left:0;top:30.5px;width:282px;height:15.3px;background:#d5d5d5;"></div>
<svg style="left:4.199999999999989px;top:5.5px;" width="8" height="5" viewBox="0 0 8 5" fill="none" stroke="#858585" stroke-width="1.2"><path d="M0.6 0.6l3.4 3.4l3.4-3.4"/></svg>
<svg style="left:19.3px;top:3.3px;" width="10" height="10" viewBox="0 0 10 10"><circle cx="4.9" cy="4.9" r="4.8" fill="#e8737b"/><rect x="4.1" y="1.9" width="1.6" height="3.8" rx="0.5" fill="#fff"/><rect x="4.1" y="6.5" width="1.6" height="1.6" rx="0.5" fill="#fff"/></svg>
<div class="t" style="left:32.8px;top:1.3px;"><b style="letter-spacing:-0.340px;">demo:</b><span style="letter-spacing:0.049px;margin-left:3.6px;">build failed</span><span style="letter-spacing:0.018px;margin-left:3px;color:#8c8c8c;">at 2020/11/25 12:57 with 7</span></div>
<div class="t" style="left:239.0px;top:1.7px;font-size:8.6px;color:#8c8c8c;"><span style="letter-spacing:-0.105px;">1 s 209 ms</span></div>
<svg style="left:17.600000000000023px;top:20.8px;" width="8" height="5" viewBox="0 0 8 5" fill="none" stroke="#858585" stroke-width="1.2"><path d="M0.6 0.6l3.4 3.4l3.4-3.4"/></svg>
<svg style="left:32.8px;top:16.9px;" width="11" height="12" viewBox="0 0 11 12"><path d="M4 0.4h4.6v6h-7v-3.6z" fill="#a9b4bd"/><path d="M4 0.4v2.4h-2.4z" fill="#e3e7ea"/><path d="M6.2 1v4.6M4 3.4h4.6" stroke="#e9edf0" stroke-width="0.7"/><rect x="0" y="6.6" width="11" height="5" fill="#5bbfe0"/><path d="M2 8.2h7M2 10h7" stroke="#dff2fa" stroke-width="0.7"/></svg>
<div class="t" style="left:46.4px;top:16.6px;"><span style="letter-spacing:-0.137px;">Servlet.java</span><span style="letter-spacing:0.023px;margin-left:2.6px;color:#8c8c8c;">src\com 7 errors</span></div>
<svg style="left:46.8px;top:33.9px;" width="10" height="10" viewBox="0 0 10 10"><circle cx="4.9" cy="4.9" r="4.8" fill="#e8737b"/><rect x="4.1" y="1.9" width="1.6" height="3.8" rx="0.5" fill="#fff"/><rect x="4.1" y="6.5" width="1.6" height="1.6" rx="0.5" fill="#fff"/></svg>
<div class="t" style="left:59.8px;top:31.6px;"><span style="letter-spacing:-0.099px;font-size:9.1px;">程序包</span><span style="letter-spacing:0.025px;">javax.servlet.http</span><span style="letter-spacing:0.034px;font-size:9.1px;">不存在</span><span style="margin-left:3.2px;color:#8c8c8c;font-size:10px;letter-spacing:-0.7px;">:5</span></div>
<svg style="left:46.8px;top:49.1px;" width="10" height="10" viewBox="0 0 10 10"><circle cx="4.9" cy="4.9" r="4.8" fill="#e8737b"/><rect x="4.1" y="1.9" width="1.6" height="3.8" rx="0.5" fill="#fff"/><rect x="4.1" y="6.5" width="1.6" height="1.6" rx="0.5" fill="#fff"/></svg>
<div class="t" style="left:59.8px;top:46.9px;"><span style="letter-spacing:-0.099px;font-size:9.1px;">程序包</span><span style="letter-spacing:0.025px;">javax.servlet.http</span><span style="letter-spacing:0.034px;font-size:9.1px;">不存在</span><span style="margin-left:3.2px;color:#8c8c8c;font-size:10px;letter-spacing:-0.7px;">:6</span></div>
<svg style="left:46.8px;top:64.4px;" width="10" height="10" viewBox="0 0 10 10"><circle cx="4.9" cy="4.9" r="4.8" fill="#e8737b"/><rect x="4.1" y="1.9" width="1.6" height="3.8" rx="0.5" fill="#fff"/><rect x="4.1" y="6.5" width="1.6" height="1.6" rx="0.5" fill="#fff"/></svg>
<div class="t" style="left:59.8px;top:62.2px;"><span style="letter-spacing:-0.099px;font-size:9.1px;">程序包</span><span style="letter-spacing:0.025px;">javax.servlet.http</span><span style="letter-spacing:0.034px;font-size:9.1px;">不存在</span><span style="margin-left:3.2px;color:#8c8c8c;font-size:10px;letter-spacing:-0.7px;">:6</span></div>
<svg style="left:46.8px;top:79.7px;" width="10" height="10" viewBox="0 0 10 10"><circle cx="4.9" cy="4.9" r="4.8" fill="#e8737b"/><rect x="4.1" y="1.9" width="1.6" height="3.8" rx="0.5" fill="#fff"/><rect x="4.1" y="6.5" width="1.6" height="1.6" rx="0.5" fill="#fff"/></svg>
<div class="t" style="left:59.8px;top:77.4px;"><span style="letter-spacing:-0.099px;font-size:9.1px;">程序包</span><span style="letter-spacing:-0.044px;">javax.servlet</span><span style="letter-spacing:0.034px;font-size:9.1px;">不存在</span><span style="margin-left:3.2px;color:#8c8c8c;font-size:10px;letter-spacing:-0.7px;">:6</span></div>
<svg style="left:46.8px;top:95.0px;" width="10" height="10" viewBox="0 0 10 10"><circle cx="4.9" cy="4.9" r="4.8" fill="#e8737b"/><rect x="4.1" y="1.9" width="1.6" height="3.8" rx="0.5" fill="#fff"/><rect x="4.1" y="6.5" width="1.6" height="1.6" rx="0.5" fill="#fff"/></svg>
<div class="t" style="left:59.8px;top:92.7px;"><span style="letter-spacing:-0.099px;font-size:9.1px;">程序包</span><span style="letter-spacing:0.025px;">javax.servlet.http</span><span style="letter-spacing:0.034px;font-size:9.1px;">不存在</span><span style="margin-left:3.2px;color:#8c8c8c;font-size:10px;letter-spacing:-0.7px;">:10</span></div>
<svg style="left:46.8px;top:110.2px;" width="10" height="10" viewBox="0 0 10 10"><circle cx="4.9" cy="4.9" r="4.8" fill="#e8737b"/><rect x="4.1" y="1.9" width="1.6" height="3.8" rx="0.5" fill="#fff"/><rect x="4.1" y="6.5" width="1.6" height="1.6" rx="0.5" fill="#fff"/></svg>
<div class="t" style="left:59.8px;top:108.0px;"><span style="letter-spacing:-0.099px;font-size:9.1px;">程序包</span><span style="letter-spacing:0.025px;">javax.servlet.http</span><span style="letter-spacing:0.034px;font-size:9.1px;">不存在</span><span style="margin-left:3.2px;color:#8c8c8c;font-size:10px;letter-spacing:-0.7px;">:10</span></div>
<svg style="left:46.8px;top:125.5px;" width="10" height="10" viewBox="0 0 10 10"><circle cx="4.9" cy="4.9" r="4.8" fill="#e8737b"/><rect x="4.1" y="1.9" width="1.6" height="3.8" rx="0.5" fill="#fff"/><rect x="4.1" y="6.5" width="1.6" height="1.6" rx="0.5" fill="#fff"/></svg>
<div class="t" style="left:59.8px;top:123.3px;"><span style="letter-spacing:-0.099px;font-size:9.1px;">程序包</span><span style="letter-spacing:-0.044px;">javax.servlet</span><span style="letter-spacing:0.034px;font-size:9.1px;">不存在</span><span style="margin-left:3.2px;color:#8c8c8c;font-size:10px;letter-spacing:-0.7px;">:10</span></div>
</div>
<div class="vl" style="left:697.6px;top:582px;height:231px;"></div>
<!-- build console -->
<div class="abs" style="left:708.8px;top:583.1px;white-space:pre;font-family:'DejaVu Sans Mono','Liberation Mono','Noto Serif CJK SC',monospace;font-size:11.13px;line-height:16.77px;color:#8a1f1f;"><span style="color:#3f86d8;text-decoration:underline;text-underline-offset:1.6px;text-decoration-thickness:0.9px;">C:\Users\gcswei\Desktop\demo\src\com\Servlet.java</span>:5:48</div>
<div class="abs" style="left:708.8px;top:598.9px;white-space:pre;font-family:'DejaVu Sans Mono','Liberation Mono','Noto Serif CJK SC',monospace;font-size:11.13px;line-height:16.77px;color:#8a1f1f;">java: <span style="letter-spacing:0.006px;font-family:'Noto Serif CJK SC',serif;font-size:10.6px;color:#a04545;">程序包</span>javax.servlet.http<span style="letter-spacing:0.206px;font-family:'Noto Serif CJK SC',serif;font-size:10.6px;color:#a04545;">不存在</span></div>
<div class="vl" style="left:1522.6px;top:582px;height:231px;background:#e4e4e4;"></div>
<div class="abs" style="left:1523.6px;top:582px;width:19.4px;height:231px;background:#f2f2f2;"></div>
<svg style="left:1527.4px;top:588.4px;" width="12" height="11" viewBox="0 0 12 11" fill="none" stroke="#6e6e6e" stroke-width="1.1"><path d="M0.4 1h11.2"/><path d="M0.4 5h8.4a2 2 0 0 1 0 4.2h-3"/><path d="M7 7.4l-1.8 1.8l1.8 1.8" stroke-width="1"/><path d="M0.4 9.2h2.2"/></svg>
<div class="abs" style="left:1524.4px;top:605px;width:16.8px;height:16px;background:#d2d2d2;border-radius:1.5px;"></div>
<svg style="left:1527.4px;top:607.6px;" width="12" height="11" viewBox="0 0 12 11" fill="none" stroke="#6e6e6e" stroke-width="1.1"><path d="M0.4 1.4h4.2M0.4 4.8h4.2M0.4 10.2h11.2"/><path d="M8.6 0v7"/><path d="M6.2 4.8l2.4 2.4l2.4-2.4" stroke-width="1"/></svg>
<!-- bottom tool bar content -->
<div class="abs" style="left:356.8px;top:814.2px;width:45.2px;height:17.2px;background:#c9c9c9;"></div>
<svg style="left:24.8px;top:819px;" width="8" height="7" viewBox="0 0 8 7" fill="#6e6e6e"><rect x="0" y="0" width="1.6" height="1.5"/><rect x="2.4" y="0" width="5.6" height="1.5"/><rect x="0" y="2.7" width="1.6" height="1.5"/><rect x="2.4" y="2.7" width="5.6" height="1.5"/><rect x="0" y="5.4" width="1.6" height="1.5"/><rect x="2.4" y="5.4" width="5.6" height="1.5"/></svg>
<div class="t" style="left:36.6px;top:817.5px;font-size:8.9px;"><span style="letter-spacing:-0.471px;">TODO</span></div>
<svg style="left:77.2px;top:818.6px;" width="8" height="8" viewBox="0 0 8 8"><circle cx="4" cy="4" r="3.9" fill="#6e6e6e"/><rect x="3.4" y="1.5" width="1.2" height="3.2" fill="#f2f2f2"/><rect x="3.4" y="5.3" width="1.2" height="1.2" fill="#f2f2f2"/></svg>
<div class="t" style="left:88.9px;top:817.5px;font-size:8.9px;"><span style="letter-spacing:-0.305px;"><u>6</u>: Problems</span></div>
<svg style="left:149.6px;top:818.8px;" width="9" height="8" viewBox="0 0 9 8"><rect x="0" y="0" width="9" height="7.6" fill="#6e6e6e"/><path d="M1.6 2l2 1.8l-2 1.8M4.6 5.8h2.6" stroke="#f2f2f2" stroke-width="0.9" fill="none"/></svg>
<div class="t" style="left:162px;top:817.5px;font-size:8.9px;"><span style="letter-spacing:-0.218px;">Terminal</span></div>
<svg style="left:210px;top:818.2px;" width="11" height="10" viewBox="0 0 11 10"><circle cx="4.4" cy="4.4" r="3.5" fill="none" stroke="#6e6e6e" stroke-width="1.6"/><path d="M3.4 2.6l3 1.8l-3 1.8z" fill="#6e6e6e"/><circle cx="8.4" cy="7.8" r="1.9" fill="#3fb950"/></svg>
<div class="t" style="left:223px;top:817.5px;font-size:8.9px;"><span style="letter-spacing:-0.482px;"><u>8</u>: Services</span></div>
<svg style="left:280px;top:818.4px;" width="9" height="9" viewBox="0 0 9 9"><path d="M0 0h7.4v2h-5.4v6.8h-2z" fill="#6e6e6e"/><rect x="2.8" y="2.8" width="6" height="6" fill="none" stroke="#6e6e6e" stroke-width="0.9"/><path d="M4.4 4.4v3M5.8 4.4v3M7.2 4.4v3" stroke="#6e6e6e" stroke-width="0.7"/></svg>
<div class="t" style="left:292px;top:817.5px;font-size:8.9px;"><span style="letter-spacing:-0.431px;">Java Enterprise</span></div>
<svg style="left:364px;top:818.2px;" width="10" height="9" viewBox="0 0 13 12"><path d="M1.2 4.8L6.4 1" stroke="#6e6e6e" stroke-width="2.7" fill="none"/><path d="M4.4 3.4L11.4 10.6" stroke="#6e6e6e" stroke-width="2.3" fill="none"/></svg>
<div class="t" style="left:377.4px;top:817.5px;font-size:8.9px;"><span style="letter-spacing:-0.390px;">Build</span></div>
<svg style="left:1486.6px;top:818.4px;" width="10" height="10" viewBox="0 0 10 10"><path d="M4.8 0.6a4.2 4.2 0 1 0 2.4 7.6l2.2 0.6l-0.4-2.6a4.2 4.2 0 0 0 -4.2 -5.6z" fill="none" stroke="#5e5e5e" stroke-width="0.9"/></svg>
<div class="t" style="left:1499.3px;top:817.5px;font-size:8.9px;"><span style="letter-spacing:-0.374px;">Event Log</span></div>
<!-- status bar content -->
<svg style="left:3.8px;top:835px;" width="10" height="10" viewBox="0 0 10 10" fill="none" stroke="#7a7a7a" stroke-width="0.9"><rect x="2.4" y="0.5" width="7" height="7"/><path d="M0.5 2.6v6.8h6.8"/></svg>
<div class="t" style="left:20.7px;top:832.7px;"><span style="letter-spacing:-0.025px;">Build completed with 7 errors and 0 warnings in 5 s 541 ms (moments ago)</span></div>
<div class="t" style="left:1401.7px;top:832.7px;"><span style="letter-spacing:-0.292px;">5:48</span></div>
<div class="t" style="left:1429px;top:832.7px;"><span style="letter-spacing:-0.841px;font-size:9.6px;">CRLF</span></div>
<div class="t" style="left:1460.7px;top:832.7px;"><span style="letter-spacing:-0.377px;font-size:9.6px;">UTF-8</span></div>
<div class="t" style="left:1495.7px;top:832.7px;"><span style="letter-spacing:-0.379px;">4 spaces</span></div>
<svg style="left:1541.6px;top:835.4px;" width="10" height="10" viewBox="0 0 10 10"><rect x="2.6" y="4.4" width="7" height="5.2" fill="#6e6e6e"/><path d="M1 4.6v-1.8a1.8 1.8 0 0 1 3.6 0v1.6" fill="none" stroke="#6e6e6e" stroke-width="1"/></svg>
<!-- ============ ARROWS ============ -->
<svg id="arrows" width="1560" height="847" style="left:0;top:0;pointer-events:none;">
<polygon points="903.6,332.0 706.2,170.7 707.5,169.1 697.3,166.8 701.8,176.3 703.0,174.7" fill="#f92a2c"/>
<polygon points="975.5,249.0 846.6,590.7 845.1,590.1 845.9,599.8 852.8,593.0 851.3,592.4" fill="#f92a2c"/>
</svg>

</body>
</html>
